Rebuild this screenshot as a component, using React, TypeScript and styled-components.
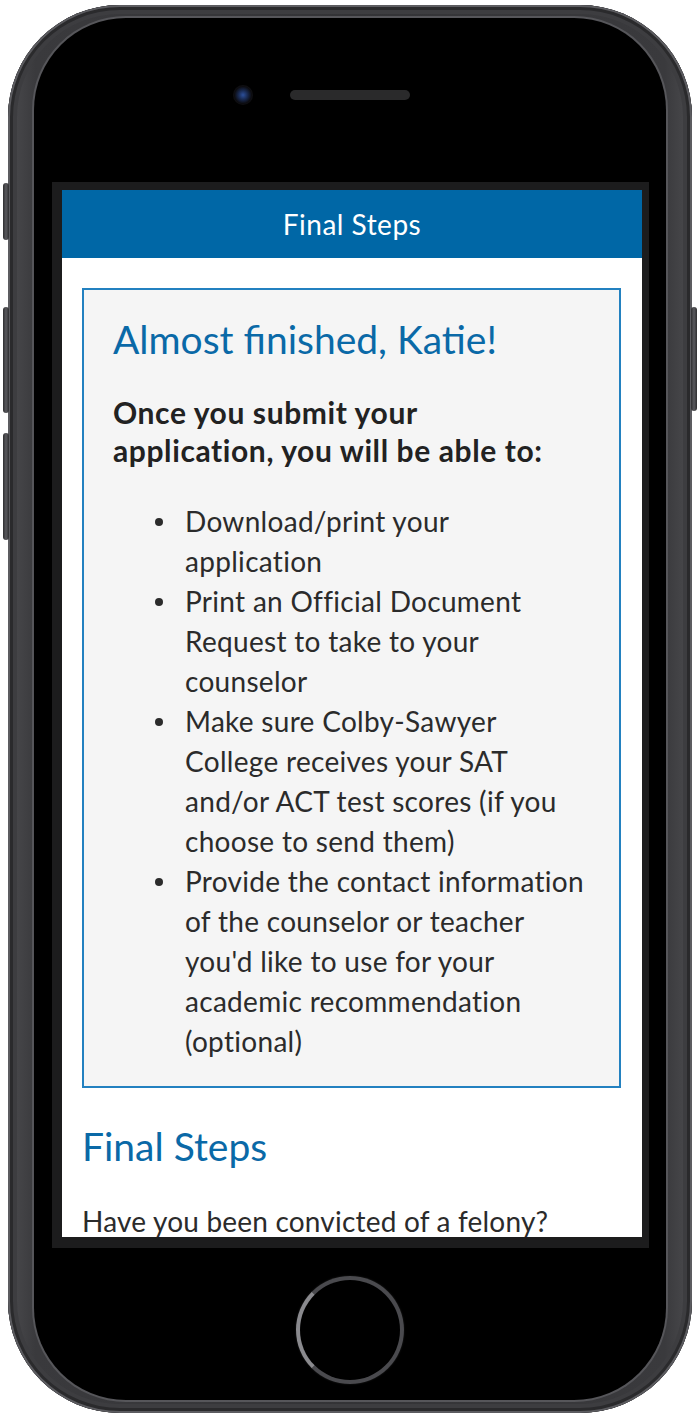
import React from "react";
import styled, {createGlobalStyle} from "styled-components";

const GlobalStyle = createGlobalStyle`
    html, body {
        margin: 0;
        padding: 0;
        background: #ffffff;
    }
    body {
        font-family: Lato, "Noto Sans", sans-serif;
    }
`;

const Page = styled.div`
    width: 700px;
    height: 1416px;
    padding-top: 5px;
    box-sizing: border-box;
    overflow: hidden;
`;

const Phone = styled.div`
    position: relative;
    width: 684px;
    height: 1408px;
    margin-left: 8px;
    box-sizing: border-box;
    padding: 13px 26px;
    border-radius: 112px;
    background: linear-gradient(90deg, #4b4b4e 0%, #3a3a3d 4%, #333336 50%, #3a3a3d 96%, #4b4b4e 100%);
    box-shadow: inset 0 0 0 2px #5c5c60, inset 0 0 0 5px #2a2a2c, inset 0 0 0 9px #3d3d40;
`;

const SideButton = styled.div<{ $side: "left" | "right"; $top: number; $height: number }>`
    position: absolute;
    ${({$side}) => ($side === "left" ? "left: -5px;" : "right: -5px;")}
    top: ${({$top}) => $top}px;
    width: 6px;
    height: ${({$height}) => $height}px;
    border-radius: 3px;
    background: linear-gradient(90deg, #2e2e30, #5a5a5e, #2e2e30);
`;

const Face = styled.div`
    height: 100%;
    box-sizing: border-box;
    border-radius: 92px;
    background: #000000;
    box-shadow: 0 0 0 2px #56565a;
    display: flex;
    flex-direction: column;
`;

const TopBar = styled.div`
    height: 164px;
    box-sizing: border-box;
    padding-top: 67px;
    display: grid;
    grid-template-columns: 1fr auto 1fr;
    align-items: start;
`;

const Camera = styled.div`
    justify-self: end;
    margin-right: 37px;
    width: 20px;
    height: 20px;
    border-radius: 50%;
    background: radial-gradient(circle, #2c4f9a 0%, #17264a 35%, #0c0c10 60%, #1a1a1c 100%);
`;

const Speaker = styled.div`
    margin-top: 5px;
    width: 120px;
    height: 10px;
    border-radius: 5px;
    background: #2a2a2b;
`;

const Bezel = styled.div`
    margin: 0 17px 0 18px;
    padding: 8px 7px 11px 10px;
    background: #1c1c1d;
`;

const Screen = styled.div`
    height: 1047px;
    overflow: hidden;
    background: #ffffff;
`;

const Header = styled.div`
    height: 68px;
    display: flex;
    align-items: center;
    justify-content: center;
    background: #0067a6;
    color: #ffffff;
    font-size: 28px;
    letter-spacing: 0.5px;
`;

const Content = styled.div`
    padding: 30px 21px 0 20px;
`;

const Notice = styled.div`
    border: 2px solid #2381c0;
    background: #f5f5f5;
    padding: 26px 29px 25px 29px;
`;

const Title = styled.h1`
    margin: 0;
    font-size: 39px;
    line-height: 46px;
    font-weight: 400;
    color: #0a69a7;
`;

const Lead = styled.p`
    margin: 31px 0 0;
    font-size: 30px;
    letter-spacing: 0.6px;
    line-height: 38px;
    font-weight: 700;
    color: #222222;
`;

const Steps = styled.ul`
    margin: 32px 0 0;
    padding: 0 0 0 72px;
    list-style: none;
`;

const Step = styled.li`
    position: relative;
    font-size: 28px;
    letter-spacing: 0.3px;
    line-height: 40px;
    color: #2b2b2b;

    &::before {
        content: "";
        position: absolute;
        left: -30px;
        top: 17px;
        width: 8px;
        height: 8px;
        border-radius: 50%;
        background: #2b2b2b;
    }
`;

const SectionTitle = styled.h2`
    margin: 36px 0 0;
    font-size: 39px;
    line-height: 44px;
    font-weight: 400;
    color: #0a69a7;
`;

const Question = styled.p`
    margin: 33px 0 0;
    font-size: 28px;
    letter-spacing: 0.2px;
    line-height: 40px;
    color: #2b2b2b;
`;

const BottomBar = styled.div`
    flex: 1;
    display: flex;
    justify-content: center;
    padding-top: 28px;
`;

const HomeButton = styled.div`
    width: 100px;
    height: 100px;
    border-radius: 50%;
    border: 4px solid #4a4a4e;
    border-left-color: #8a8a8e;
    box-shadow: 0 0 2px #222;
`;

const steps: React.ReactNode[] = [
    <>Download/print your<br/>application</>,
    <>Print an Official Document<br/>Request to take to your<br/>counselor</>,
    <>Make sure Colby-Sawyer<br/>College receives your SAT<br/>and/or ACT test scores (if you<br/>choose to send them)</>,
    <>Provide the contact information<br/>of the counselor or teacher<br/>you'd like to use for your<br/>academic recommendation<br/>(optional)</>,
];

const App = () => {
    return (
        <Page>
            <GlobalStyle/>
            <Phone>
                <SideButton $side="left" $top={178} $height={57}/>
                <SideButton $side="left" $top={302} $height={106}/>
                <SideButton $side="left" $top={428} $height={107}/>
                <SideButton $side="right" $top={302} $height={104}/>
                <Face>
                    <TopBar>
                        <Camera/>
                        <Speaker/>
                        <div/>
                    </TopBar>
                    <Bezel>
                        <Screen>
                            <Header>Final Steps</Header>
                            <Content>
                                <Notice>
                                    <Title>Almost finished, Katie!</Title>
                                    <Lead>Once you submit your<br/>application, you will be able to:</Lead>
                                    <Steps>
                                        {steps.map((s, i) => <Step key={i}>{s}</Step>)}
                                    </Steps>
                                </Notice>
                                <SectionTitle>Final Steps</SectionTitle>
                                <Question>Have you been convicted of a felony?</Question>
                            </Content>
                        </Screen>
                    </Bezel>
                    <BottomBar>
                        <HomeButton/>
                    </BottomBar>
                </Face>
            </Phone>
        </Page>
    );
};

export default App;
